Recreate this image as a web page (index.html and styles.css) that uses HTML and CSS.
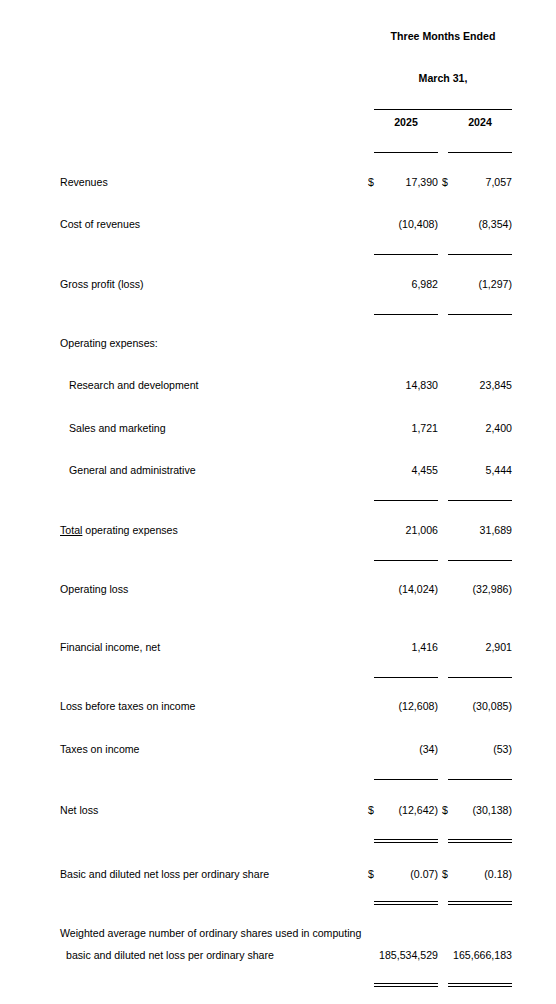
FILE: index.html
```html
<!DOCTYPE html>
<html lang="en">

<head>
    <meta charset="UTF-8">
    <meta name="viewport" content="width=device-width, initial-scale=1">
    <title>Statements of Operations</title>
    <link rel="stylesheet" href="styles.css">
</head>

<body>
    <div class="statement">
        <div class="row head first">
            <span class="span-all">Three Months Ended</span>
        </div>
        <div class="row head">
            <span class="span-all">March 31,</span>
        </div>
        <div class="line">
            <span class="rule-all"></span>
        </div>
        <div class="row head years">
            <span class="c1">2025</span>
            <span class="c2">2024</span>
        </div>
        <div class="line">
            <span class="c1 rule"></span>
            <span class="c2 rule"></span>
        </div>

        <div class="row">
            <span class="label">Revenues</span>
            <span class="cur1">$</span>
            <span class="v1">17,390</span>
            <span class="cur2">$</span>
            <span class="v2">7,057</span>
        </div>
        <div class="row">
            <span class="label">Cost of revenues</span>
            <span class="v1">(10,408)</span>
            <span class="v2">(8,354)</span>
        </div>
        <div class="line">
            <span class="c1 rule"></span>
            <span class="c2 rule"></span>
        </div>
        <div class="row">
            <span class="label">Gross profit (loss)</span>
            <span class="v1">6,982</span>
            <span class="v2">(1,297)</span>
        </div>
        <div class="line">
            <span class="c1 rule"></span>
            <span class="c2 rule"></span>
        </div>

        <div class="row tight">
            <span class="label">Operating expenses:</span>
        </div>
        <div class="row">
            <span class="label sub">Research and development</span>
            <span class="v1">14,830</span>
            <span class="v2">23,845</span>
        </div>
        <div class="row loose">
            <span class="label sub">Sales and marketing</span>
            <span class="v1">1,721</span>
            <span class="v2">2,400</span>
        </div>
        <div class="row">
            <span class="label sub">General and administrative</span>
            <span class="v1">4,455</span>
            <span class="v2">5,444</span>
        </div>
        <div class="line">
            <span class="c1 rule"></span>
            <span class="c2 rule"></span>
        </div>
        <div class="row">
            <span class="label"><u>Total</u> operating expenses</span>
            <span class="v1">21,006</span>
            <span class="v2">31,689</span>
        </div>
        <div class="line">
            <span class="c1 rule"></span>
            <span class="c2 rule"></span>
        </div>

        <div class="row tight">
            <span class="label">Operating loss</span>
            <span class="v1">(14,024)</span>
            <span class="v2">(32,986)</span>
        </div>
        <div class="row wide">
            <span class="label">Financial income, net</span>
            <span class="v1">1,416</span>
            <span class="v2">2,901</span>
        </div>
        <div class="line">
            <span class="c1 rule"></span>
            <span class="c2 rule"></span>
        </div>
        <div class="row tight">
            <span class="label">Loss before taxes on income</span>
            <span class="v1">(12,608)</span>
            <span class="v2">(30,085)</span>
        </div>
        <div class="row loose">
            <span class="label">Taxes on income</span>
            <span class="v1">(34)</span>
            <span class="v2">(53)</span>
        </div>
        <div class="line">
            <span class="c1 rule"></span>
            <span class="c2 rule"></span>
        </div>

        <div class="row net">
            <span class="label">Net loss</span>
            <span class="cur1">$</span>
            <span class="v1">(12,642)</span>
            <span class="cur2">$</span>
            <span class="v2">(30,138)</span>
        </div>
        <div class="line double after-net">
            <span class="c1 rule"></span>
            <span class="c2 rule"></span>
        </div>
        <div class="row per-share">
            <span class="label">Basic and diluted net loss per ordinary share</span>
            <span class="cur1">$</span>
            <span class="v1">(0.07)</span>
            <span class="cur2">$</span>
            <span class="v2">(0.18)</span>
        </div>
        <div class="line double">
            <span class="c1 rule"></span>
            <span class="c2 rule"></span>
        </div>
        <div class="row tight">
            <span class="label">Weighted average number of ordinary shares used in computing</span>
        </div>
        <div class="row near">
            <span class="label cont">basic and diluted net loss per ordinary share</span>
            <span class="v1">185,534,529</span>
            <span class="v2">165,666,183</span>
        </div>
        <div class="line double last">
            <span class="c1 rule"></span>
            <span class="c2 rule"></span>
        </div>
    </div>
</body>

</html>
```

FILE: styles.css
```css
* {
    margin: 0;
    padding: 0;
    box-sizing: border-box;
}

body {
    background-color: #ffffff;
    color: #000000;
    font-family: "Liberation Sans", Arial, sans-serif;
    font-size: 10.6px;
    line-height: 13px;
}

.statement {
    width: 512px;
    padding-left: 60px;
    padding-bottom: 16px;
}

/* label | $ | 2025 | $ | 2024 */
.row,
.line {
    display: grid;
    grid-template-columns: 308px 6px 64px 10px 64px;
}

.row {
    height: 13px;
    line-height: 15px;
    margin-top: 29px;
    white-space: nowrap;
}

.line {
    margin-top: 24px;
}

.line + .row {
    margin-top: 22px;
}

.row.first {
    margin-top: 30px;
}

.line + .row.years {
    margin-top: 5px;
}

.line + .row.tight,
.row.tight {
    margin-top: 21px;
}

.row.loose {
    margin-top: 30px;
}

.row.near {
    margin-top: 9px;
}

.row.wide {
    margin-top: 45px;
}

.line + .row.net {
    margin-top: 23px;
}

.line + .row.per-share {
    margin-top: 24px;
}

.head {
    font-weight: bold;
    line-height: 13px;
}

.head.years {
    line-height: 15px;
}

.span-all {
    grid-column: 3 / 6;
    text-align: center;
}

.label {
    grid-column: 1;
}

.label.sub {
    padding-left: 9px;
}

.label.cont {
    padding-left: 6px;
}

.cur1 {
    grid-column: 2;
}

.cur2 {
    grid-column: 4;
    text-align: right;
}

.v1,
.c1 {
    grid-column: 3;
}

.v2,
.c2 {
    grid-column: 5;
}

.v1,
.v2 {
    text-align: right;
}

.head .c1,
.head .c2 {
    text-align: center;
}

.rule {
    height: 1px;
    background-color: #000000;
}

.rule-all {
    grid-column: 3 / 6;
    height: 1px;
    background-color: #000000;
}

.line.double .rule {
    height: 4px;
    background-color: transparent;
    border-top: 1px solid #000000;
    border-bottom: 1px solid #000000;
}

.line.double {
    margin-top: 21px;
}

.line.double.after-net {
    margin-top: 23px;
}

.line.double.last {
    margin-top: 22px;
}
```
